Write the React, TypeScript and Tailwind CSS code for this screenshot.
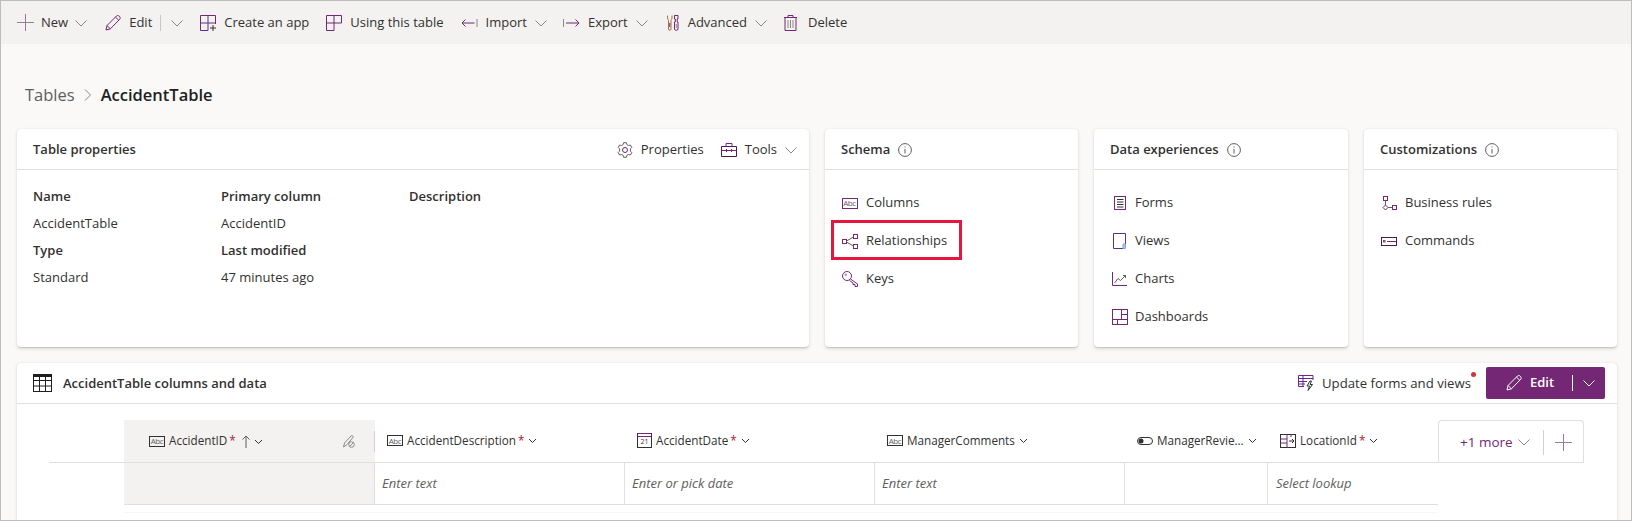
import React from "react";

const P = "#742774";
const D = "#323130";
const G = "#8a8886";

function Svg({ w = 16, h = 16, children, className = "" }: { w?: number; h?: number; children: React.ReactNode; className?: string }) {
  return (
    <svg width={w} height={h} viewBox={`0 0 ${w} ${h}`} fill="none" stroke={P} strokeWidth="1" className={`shrink-0 ${className}`}>
      {children}
    </svg>
  );
}

const Chevron = ({ w = 12, c = "#8a8886" }: { w?: number; c?: string }) => (
  <svg width={w} height={w} viewBox="0 0 12 12" fill="none" stroke={c} strokeWidth="1" className="shrink-0">
    <path d="M0.5 3.5 L6 9 L11.5 3.5" />
  </svg>
);
const SmallChevron = () => (
  <svg width="9" height="9" viewBox="0 0 9 9" fill="none" stroke="#323130" strokeWidth="1" className="shrink-0">
    <path d="M1 3 L4.5 6.5 L8 3" />
  </svg>
);
const Plus = ({ s = 17 }: { s?: number }) => (
  <svg width={s} height={s} viewBox="0 0 17 17" fill="none" strokeWidth="1" className="shrink-0">
    <path d="M8.5 0 V17" stroke="#a56fa5" />
    <path d="M0 8.5 H17" stroke="#8a8886" />
  </svg>
);
const Pencil = ({ c = P }: { c?: string }) => (
  <Svg>
    <g stroke={c}>
      <path d="M1 15 L2 10.5 L11.5 1 C12.5 0.3 13.4 0.4 14.3 1.2 C15.2 2 15.5 3.2 14.8 4.2 L5.4 13.8 Z" />
      <path d="M2 10.5 L5.4 13.8" />
      <path d="M10.5 2.2 L13.8 5.3" />
    </g>
  </Svg>
);
const CreateApp = () => (
  <Svg>
    <path d="M0.5 15.5 V0.5 H15.5 V9" />
    <path d="M0.5 8 H15.5 M8 0.5 V15.5 H0.5" stroke="#5c2e91" />
    <path d="M10 13 H16 M13 10 V16" stroke={D} />
  </Svg>
);
const UsingTable = () => (
  <Svg>
    <path d="M0.5 15.5 V0.5 H15.5 V8 H8 V15.5 Z" />
    <path d="M0.5 8 H8 M8 0.5 V8" />
  </Svg>
);
const ImportI = () => (
  <Svg w={17} h={12}>
    <path d="M16 2 V10" stroke={G} />
    <path d="M13.5 6 H1 M4.5 2.5 L1 6 L4.5 9.5" />
  </Svg>
);
const ExportI = () => (
  <Svg w={17} h={12}>
    <path d="M0.5 2 V10" stroke={G} />
    <path d="M3 6 H16 M12.5 2.5 L16 6 L12.5 9.5" />
  </Svg>
);
const Advanced = () => (
  <Svg w={12} h={16}>
    <path d="M0.5 0.5 V3 C0.5 4.5 1.5 4.5 1.5 5.5 V14 C1.5 15.8 4 15.8 4 14 V5.5 C4 4.5 5 4.5 5 3 V0.5" stroke="#a0703a" />
    <path d="M2.75 8 V12" stroke={P} />
    <path d="M7.5 0.5 H11 V4 H10.2 V7 H11 V14 C11 15.8 7.5 15.8 7.5 14 V7 H8.3 V4 H7.5 Z" />
    <path d="M9.25 9 V13" stroke={G} />
  </Svg>
);
const Trash = () => (
  <Svg w={13} h={16}>
    <path d="M0 2.5 H13 M4 2.5 V0.5 H9 V2.5 M1 2.5 V15.5 H12 V2.5" />
    <path d="M4 5 V13 M6.5 5 V13 M9 5 V13" stroke={G} />
  </Svg>
);
const Gear = () => (
  <svg width="16" height="16" viewBox="0 0 16 16" fill="none" stroke="#605e5c" strokeWidth="1" className="shrink-0">
    <circle cx="8" cy="8" r="2.5" stroke={P} />
    <path d="M6.6 0.7 H9.4 L9.9 2.6 L11.5 3.5 L13.4 3 L14.8 5.4 L13.4 6.8 V9.2 L14.8 10.6 L13.4 13 L11.5 12.5 L9.9 13.4 L9.4 15.3 H6.6 L6.1 13.4 L4.5 12.5 L2.6 13 L1.2 10.6 L2.6 9.2 V6.8 L1.2 5.4 L2.6 3 L4.5 3.5 L6.1 2.6 Z" />
  </svg>
);
const Toolbox = () => (
  <Svg w={16} h={14}>
    <path d="M0.5 3.5 H15.5 V13.5 H0.5 Z" stroke="#4b1a4b" />
    <path d="M5 3.5 V0.5 H11 V3.5" />
    <path d="M0.5 7.5 H15.5 M5.5 6 V9 M10.5 6 V9" />
  </Svg>
);
const Info = () => (
  <svg width="14" height="14" viewBox="0 0 14 14" fill="none" stroke="#605e5c" strokeWidth="1" className="shrink-0">
    <circle cx="7" cy="7" r="6.4" />
    <path d="M7 6 V10.5" />
    <path d="M7 3.5 V4.5" />
  </svg>
);
const Abc = ({ w = 16, h = 11, c = P }: { w?: number; h?: number; c?: string }) => (
  <span
    className="shrink-0 flex items-center justify-center border text-[8px] tracking-[-0.4px] leading-none text-[#605e5c]"
    style={{ width: w, height: h, borderColor: c }}
  >
    Abc
  </span>
);
const Rel = () => (
  <Svg w={16} h={15}>
    <rect x="0.5" y="5.5" width="4" height="4" />
    <rect x="11.5" y="0.5" width="4" height="4" />
    <rect x="11.5" y="10.5" width="4" height="4" />
    <path d="M4.5 7 L11.5 3 M4.5 8 L11.5 12" stroke="#605e5c" />
  </Svg>
);
const Key = () => (
  <Svg w={16} h={16}>
    <circle cx="5" cy="5" r="4.5" />
    <path d="M8.5 8 L15.5 13 V15.5 H13 V13.5 H11 V12 L7.5 9.5" />
    <circle cx="3.8" cy="3.8" r="0.8" stroke="#8a8886" />
  </Svg>
);
const Forms = () => (
  <Svg w={12} h={14}>
    <rect x="0.5" y="0.5" width="11" height="13" />
    <path d="M3 3.5 H9.5 M3 6 H9.5 M3 8.5 H9.5 M3 11 H9.5" stroke={D} />
  </Svg>
);
const Views = () => (
  <Svg w={13} h={16}>
    <path d="M12.5 11 V0.5 H0.5 V15.5 H10" stroke="#5c2e91" />
    <path d="M10 11 H12.5 V15.5 H10 Z" fill="#a6c8e8" stroke="#8aa8c8" />
  </Svg>
);
const Charts = () => (
  <Svg w={15} h={14}>
    <path d="M0.5 0 V13.5 H15" />
    <path d="M2.5 11 L6 6.5 L8.5 8.5 L13.5 3.5 M11 3.5 H13.5 V6" stroke="#605e5c" />
  </Svg>
);
const Dash = () => (
  <Svg w={16} h={16}>
    <rect x="0.5" y="0.5" width="15" height="15" />
    <path d="M9.5 0.5 V10.5 M0.5 10.5 H15.5 M9.5 5.5 H15.5 M5.5 10.5 V15.5" />
  </Svg>
);
const Rules = () => (
  <Svg w={16} h={15}>
    <rect x="2.5" y="0.5" width="4" height="4" />
    <path d="M4.5 4.5 V9" stroke="#605e5c" />
    <path d="M4.5 9 L7 11.5 L4.5 14 L2 11.5 Z" />
    <path d="M7 11.5 H11" stroke="#605e5c" />
    <rect x="11.5" y="9.5" width="4" height="4" />
  </Svg>
);
const Commands = () => (
  <Svg w={16} h={9}>
    <rect x="0.5" y="0.5" width="15" height="8" stroke="#4b1a4b" />
    <path d="M6 4.5 H15" stroke={P} />
    <rect x="2.5" y="3.5" width="1.5" height="1.5" stroke="#605e5c" />
  </Svg>
);
const TableI = () => (
  <svg width="19" height="18" viewBox="0 0 19 18" fill="none" stroke="#201f1e" strokeWidth="1" className="shrink-0">
    <rect x="0.5" y="0.5" width="18" height="17" />
    <path d="M0.5 1.5 H18.5 M0.5 2.5 H18.5 M0.5 6.5 H18.5 M0.5 12 H18.5 M6.5 2.5 V17.5 M12.5 2.5 V17.5" />
  </svg>
);
const Update = () => (
  <Svg w={16} h={16}>
    <path d="M6 11.5 H0.5 V0.5 H15 V5" />
    <path d="M0.5 3.5 H15 M0.5 6.5 H9 M0.5 9 H7 M5 0.5 V11" stroke="#5c2e91" />
    <path d="M12 6 L9 11 H11.5 L10 15.5 L14.5 9.5 H12 L13.5 6 Z" stroke={D} />
  </Svg>
);
const Calendar = () => (
  <span className="shrink-0 relative w-[15px] h-[15px] border border-[#323130] border-t-[#742774] mt-[-1px] flex items-end justify-center text-[7px] leading-[10px] text-[#323130]">
    <span className="absolute left-0 right-0 top-[2px] h-px bg-[#742774]" />
    21
  </span>
);
const Toggle = () => (
  <Svg w={16} h={8}>
    <rect x="0.5" y="0.5" width="15" height="7" rx="3.5" stroke={D} />
    <circle cx="4" cy="4" r="2.5" fill={D} stroke="none" />
  </Svg>
);
const Lookup = () => (
  <Svg w={16} h={14}>
    <rect x="0.5" y="0.5" width="15" height="13" stroke={D} />
    <path d="M0.5 5 H7 M0.5 9 H7 M7 0.5 V13.5 M11 0.5 V3" stroke={P} />
    <path d="M9 7 H14 M12 5 L14 7 L12 9" stroke={D} />
  </Svg>
);
const PenLock = () => (
  <svg width="12" height="14" viewBox="0 0 12 14" fill="none" stroke="#8a8886" strokeWidth="1" className="shrink-0">
    <path d="M0.5 13 L1.5 9 L8 2 C9 1 10.5 2 10 3.5 L4 10.5 Z" />
    <circle cx="8.5" cy="10.5" r="2.8" />
    <path d="M6.5 12.5 L10.5 8.5" />
  </svg>
);
const Up = () => (
  <svg width="8" height="13" viewBox="0 0 8 13" fill="none" stroke="#605e5c" strokeWidth="1" className="shrink-0">
    <path d="M4 1 V13 M0.5 4.5 L4 1 L7.5 4.5" />
  </svg>
);

const Tool = ({ icon, label, ml, chev, gap = 8 }: { icon: React.ReactNode; label: string; ml: string; chev?: string; gap?: number }) => (
  <div className={`flex items-center ${ml}`} style={{ gap }}>
    <span className="flex items-center">{icon}</span>
    <span>{label}</span>
    {chev && <span className={chev}><Chevron /></span>}
  </div>
);

const Star = () => <span className="text-[#a4262c] ml-[2px]">*</span>;

const Card = ({ title, info = true, width, items, iconW }: { title: string; info?: boolean; width: string; items: [React.ReactNode, string][]; iconW: string }) => (
  <section className={`${width} h-[218px] bg-white rounded-[4px] shadow-[0_1.6px_3.6px_rgba(0,0,0,0.13),0_0.3px_0.9px_rgba(0,0,0,0.11)]`}>
    <header className="h-[41px] border-b border-[#e1dfdd] flex items-center pl-4 pt-px gap-[8px] text-[13px] font-semibold text-[#323130]">
      {title}
      {info && <Info />}
    </header>
    <ul className="pt-[22px] pl-4 flex flex-col gap-[16px] text-[13px] text-[#323130]">
      {items.map(([icon, label]) => (
        <li key={label} className="relative h-[22px] flex items-center">
          <span className={`${iconW} flex justify-center shrink-0`}>{icon}</span>
          {label}
          {label === "Relationships" && (
            <span className="absolute left-[-10px] top-[-10px] w-[131px] h-[40px] border-[3px] border-[#e8163c]" />
          )}
        </li>
      ))}
    </ul>
  </section>
);

const HeadCell = ({ width, icon, children, chevMl = "ml-[4px]" }: { width: string; icon: React.ReactNode; children: React.ReactNode; chevMl?: string }) => (
  <div className={`${width} shrink-0 flex items-center pl-3 gap-[4px] text-[11.7px] font-medium text-[#323130] h-full pb-[1px]`}>
    {icon}
    <span className="flex items-center whitespace-nowrap">{children}<span className={`${chevMl}`}><SmallChevron /></span></span>
  </div>
);

const BodyCell = ({ width, text }: { width: string; text?: string }) => (
  <div className={`${width} shrink-0 border-r border-[#e1dfdd] flex items-center pl-[7px] italic text-[13px] text-[#605e5c]`}>{text}</div>
);

export default function App() {
  return (
    <div className="w-[1632px] h-[521px] overflow-hidden border border-[#bdbdbd] bg-[#faf9f8] font-['Open_Sans','Noto_Sans',sans-serif] text-[#323130] flex flex-col">
      <nav className="h-[43px] shrink-0 bg-[#f3f2f1] flex items-center text-[13px] pl-4">
        <Tool icon={<Plus />} label="New" ml="" chev="ml-[0px]" gap={7} />
        <Tool icon={<Pencil />} label="Edit" ml="ml-[18px]" />
        <span className="ml-2 w-px h-4 bg-[#c8c6c4]" />
        <span className="ml-[10px]"><Chevron /></span>
        <Tool icon={<CreateApp />} label="Create an app" ml="ml-[17px]" />
        <Tool icon={<UsingTable />} label="Using this table" ml="ml-[17px]" />
        <Tool icon={<ImportI />} label="Import" ml="ml-[17px]" />
        <span className="ml-2"><Chevron /></span>
        <Tool icon={<ExportI />} label="Export" ml="ml-[16px]" />
        <span className="ml-2"><Chevron /></span>
        <Tool icon={<Advanced />} label="Advanced" ml="ml-[19px]" gap={9} />
        <span className="ml-2"><Chevron /></span>
        <Tool icon={<Trash />} label="Delete" ml="ml-[17px]" gap={11} />
      </nav>

      <div className="h-[85px] shrink-0 flex items-center pl-6 pt-[17px] text-[16.5px]">
        <span className="text-[#605e5c]">Tables</span>
        <svg width="8" height="12" viewBox="0 0 8 12" fill="none" stroke="#8a8886" className="mx-[9px]"><path d="M1 0.5 L6.5 6 L1 11.5" /></svg>
        <span className="font-semibold text-[#201f1e]">AccidentTable</span>
      </div>

      <div className="flex gap-4 pl-4 shrink-0">
        <section className="w-[792px] h-[218px] bg-white rounded-[4px] shadow-[0_1.6px_3.6px_rgba(0,0,0,0.13),0_0.3px_0.9px_rgba(0,0,0,0.11)]">
          <header className="h-[41px] border-b border-[#e1dfdd] flex items-center pl-4 pr-3 pt-px text-[13px]">
            <span className="font-semibold flex-1">Table properties</span>
            <span className="flex items-center gap-2"><Gear />Properties</span>
            <span className="flex items-center gap-2 ml-[17px]"><Toolbox />Tools<span className="ml-0"><Chevron /></span></span>
          </header>
          <div className="grid grid-cols-[188px_188px_1fr] auto-rows-[27px] pl-4 pt-[13px] text-[13px] items-center">
            <b className="font-semibold">Name</b><b className="font-semibold">Primary column</b><b className="font-semibold">Description</b>
            <span>AccidentTable</span><span>AccidentID</span><span />
            <b className="font-semibold">Type</b><b className="font-semibold">Last modified</b><span />
            <span>Standard</span><span>47 minutes ago</span><span />
          </div>
        </section>
        <Card
          title="Schema"
          width="w-[253px]"
          iconW="w-[25px] pr-[8px]"
          items={[[<Abc />, "Columns"], [<Rel />, "Relationships"], [<Key />, "Keys"]]}
        />
        <Card
          title="Data experiences"
          width="w-[254px]"
          iconW="w-[25px] pr-[6px]"
          items={[[<Forms />, "Forms"], [<Views />, "Views"], [<Charts />, "Charts"], [<Dash />, "Dashboards"]]}
        />
        <Card
          title="Customizations"
          width="w-[253px]"
          iconW="w-[25px] pr-[8px]"
          items={[[<Rules />, "Business rules"], [<Commands />, "Commands"]]}
        />
      </div>

      <section className="mt-4 ml-4 w-[1600px] flex-1 min-h-0 bg-white rounded-t-[4px] shadow-[0_1.6px_3.6px_rgba(0,0,0,0.13),0_0.3px_0.9px_rgba(0,0,0,0.11)]">
        <header className="h-[41px] border-b border-[#e1dfdd] flex items-center pl-4 pr-3 text-[13px]">
          <TableI />
          <span className="ml-[11px] font-semibold flex-1 pt-px">AccidentTable columns and data</span>
          <Update />
          <span className="ml-[8px] relative text-[13.2px] pt-px">
            Update forms and views
            <span className="absolute right-[-5px] top-[-1px] w-[5px] h-[5px] rounded-full bg-[#d13438]" />
          </span>
          <button className="ml-[15px] w-[119px] h-8 rounded-[2px] bg-[#742774] text-white flex items-center pl-[20px] font-semibold">
            <Pencil c="#ffffff" />
            <span className="ml-2">Edit</span>
            <span className="ml-[18px] w-px h-4 bg-white" />
            <span className="ml-[10px]"><Chevron c="#ffffff" /></span>
          </button>
        </header>
        <div className="pl-8 pt-4 flex">
          <div className="w-[75px] h-[43px] border-b border-[#e1dfdd] shrink-0" />
          <div className="w-[1314px] shrink-0">
            <div className="h-[43px] flex border-b border-[#e1dfdd]">
              <div className="w-[251px] shrink-0 bg-[#f3f2f1] flex items-center pl-[25px] text-[11.7px] font-medium h-full relative">
                <Abc c={D} />
                <span className="ml-[4px]">AccidentID</span>
                <Star />
                <span className="ml-[6px]"><Up /></span>
                <span className="ml-[4px]"><SmallChevron /></span>
                <span className="ml-[80px]"><PenLock /></span>
                <span className="absolute right-0 top-[11px] h-[21px] w-px bg-[#d2d0ce]" />
              </div>
              <HeadCell width="w-[250px]" icon={<Abc c={D} />}>AccidentDescription<Star /></HeadCell>
              <HeadCell width="w-[250px]" icon={<Calendar />}>AccidentDate<Star /></HeadCell>
              <HeadCell width="w-[250px]" icon={<Abc c={D} />}>ManagerComments</HeadCell>
              <HeadCell width="w-[143px]" icon={<Toggle />}>ManagerRevie...</HeadCell>
              <HeadCell width="w-[170px]" icon={<Lookup />}>LocationId<Star /></HeadCell>
            </div>
            <div className="h-[42px] flex border-b border-[#e1dfdd]">
              <div className="w-[251px] shrink-0 bg-[#f3f2f1] border-r border-[#e1dfdd]" />
              <BodyCell width="w-[250px]" text="Enter text" />
              <BodyCell width="w-[250px]" text="Enter or pick date" />
              <BodyCell width="w-[250px]" text="Enter text" />
              <BodyCell width="w-[143px]" />
              <div className="w-[170px] shrink-0 flex items-center pl-[8px] italic text-[13px] text-[#605e5c]">Select lookup</div>
            </div>
            <div className="h-2 border-b border-[#f8f7f6]" />
          </div>
          <div className="w-[146px] h-[43px] shrink-0 border border-b-0 border-[#e1dfdd] rounded-t-[4px] flex items-center text-[13.5px] text-[#742774] pl-[21px] relative">
            +1 more
            <span className="ml-[5px]"><Chevron /></span>
            <span className="ml-[13px] w-px h-[25px] bg-[#d2d0ce]" />
            <span className="ml-[11px]"><Plus /></span>
            <span className="absolute left-[-1px] right-[-1px] bottom-0 h-px bg-[#e1dfdd]" />
          </div>
        </div>
      </section>
    </div>
  );
}
